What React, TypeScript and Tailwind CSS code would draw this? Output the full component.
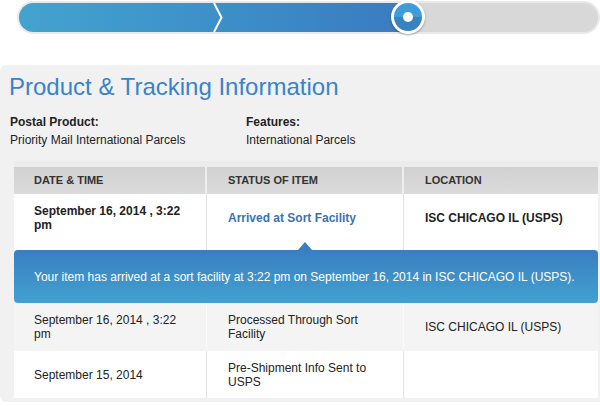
import React from "react";

const font = { fontFamily: '"Liberation Sans", Arial, sans-serif' };

function ProgressBar() {
  return (
    <div className="h-[64px] pl-[17px]">
      <div className="relative mt-[1px] h-[33px] w-[583px] rounded-full bg-[#e9e9e9] p-[2px]">
        <div className="relative h-full w-full overflow-hidden rounded-full bg-[#d8d8d8]">
          <div className="h-full w-[389px] bg-gradient-to-r from-[#44a3ce] via-[#3d90c8] to-[#3a7bc0]" />
          <svg
            className="absolute left-[193px] top-0"
            width="12"
            height="29"
            viewBox="0 0 12 29"
          >
            <polyline
              points="2,0 9.5,14.5 2,29"
              fill="none"
              stroke="#ffffff"
              strokeWidth="2"
            />
          </svg>
        </div>
        <div className="absolute left-[374px] top-[-1px] flex h-[34px] w-[34px] items-center justify-center rounded-full bg-white shadow-[0_1px_2px_rgba(0,0,0,0.35)]">
          <div className="relative flex h-[28px] w-[28px] items-center justify-center overflow-hidden rounded-full bg-gradient-to-b from-[#3d9cd9] from-50% to-[#3883bf] to-50%">
            <div className="h-[10px] w-[10px] rounded-full bg-white" />
          </div>
        </div>
      </div>
    </div>
  );
}

function Cell({
  children,
  className = "",
}: {
  children: React.ReactNode;
  className?: string;
}) {
  return (
    <div className={`flex h-full items-center pl-[20px] pr-[20px] ${className}`}>
      <div className="leading-[14px]">{children}</div>
    </div>
  );
}

export default function App() {
  return (
    <div
      className="relative h-[406px] w-[600px] overflow-hidden bg-white text-[#222]"
      style={font}
    >
      <ProgressBar />
      <div className="h-[337px] w-[600px] rounded-l-[6px] bg-[#f2f1f2] pt-[8px]">
        <h1 className="pl-[9px] text-[24px] leading-[28px] text-[#3983cc]">
          Product &amp; Tracking Information
        </h1>
        <div className="mt-[12px] grid grid-cols-[236px_1fr] pl-[10px] text-[12px] leading-[18px]">
          <div>
            <div className="font-bold">Postal Product:</div>
            <div>Priority Mail International Parcels</div>
          </div>
          <div>
            <div className="font-bold">Features:</div>
            <div>International Parcels</div>
          </div>
        </div>

        <div className="ml-[14px] mt-[12px] w-[584px]">
          <div className="h-[6px] bg-[#ececec]" />
          <div className="grid h-[27px] grid-cols-[193px_197px_194px] bg-gradient-to-b from-[#d1d1d1] to-[#dbdbdb] text-[11px] font-bold uppercase text-[#333]">
            <div className="flex items-center border-r-2 border-[#eeeeee] pl-[20px]">
              Date &amp; Time
            </div>
            <div className="flex items-center border-r-2 border-[#eeeeee] pl-[21px]">
              Status of Item
            </div>
            <div className="flex items-center pl-[21px]">Location</div>
          </div>

          <div className="grid h-[56px] grid-cols-[193px_197px_194px] bg-white text-[12px] font-bold">
            <Cell className="border-r border-[#e3e3e3] pb-[8px]">
              September 16, 2014 , 3:22 pm
            </Cell>
            <Cell className="border-r border-[#e3e3e3] pb-[8px] pl-[21px] text-[#3873b3]">
              Arrived at Sort Facility
            </Cell>
            <Cell className="pb-[8px] pl-[21px]">ISC CHICAGO IL (USPS)</Cell>
          </div>

          <div className="relative flex h-[53px] items-center rounded-[4px] bg-gradient-to-b from-[#3a7ec2] to-[#42a1cf] pl-[20px] text-[12px] text-white">
            <div className="absolute left-[284px] top-[-8px] h-0 w-0 border-b-[8px] border-l-[7px] border-r-[7px] border-b-[#3a7ec2] border-l-transparent border-r-transparent" />
            Your item has arrived at a sort facility at 3:22 pm on September 16,
            2014 in ISC CHICAGO IL (USPS).
          </div>

          <div className="grid h-[48px] grid-cols-[193px_197px_194px] bg-[#f4f4f4] text-[12px]">
            <Cell className="border-r border-[#fbfbfb]">
              September 16, 2014 , 3:22 pm
            </Cell>
            <Cell className="border-r border-[#fbfbfb] pl-[21px]">
              Processed Through Sort Facility
            </Cell>
            <Cell className="pl-[21px]">ISC CHICAGO IL (USPS)</Cell>
          </div>

          <div className="grid h-[47px] grid-cols-[193px_197px_194px] bg-white text-[12px]">
            <Cell className="border-r border-[#e3e3e3]">September 15, 2014</Cell>
            <Cell className="border-r border-[#e3e3e3] pl-[21px]">
              Pre-Shipment Info Sent to USPS
            </Cell>
            <Cell className="pl-[21px]">{""}</Cell>
          </div>
        </div>
      </div>
    </div>
  );
}
